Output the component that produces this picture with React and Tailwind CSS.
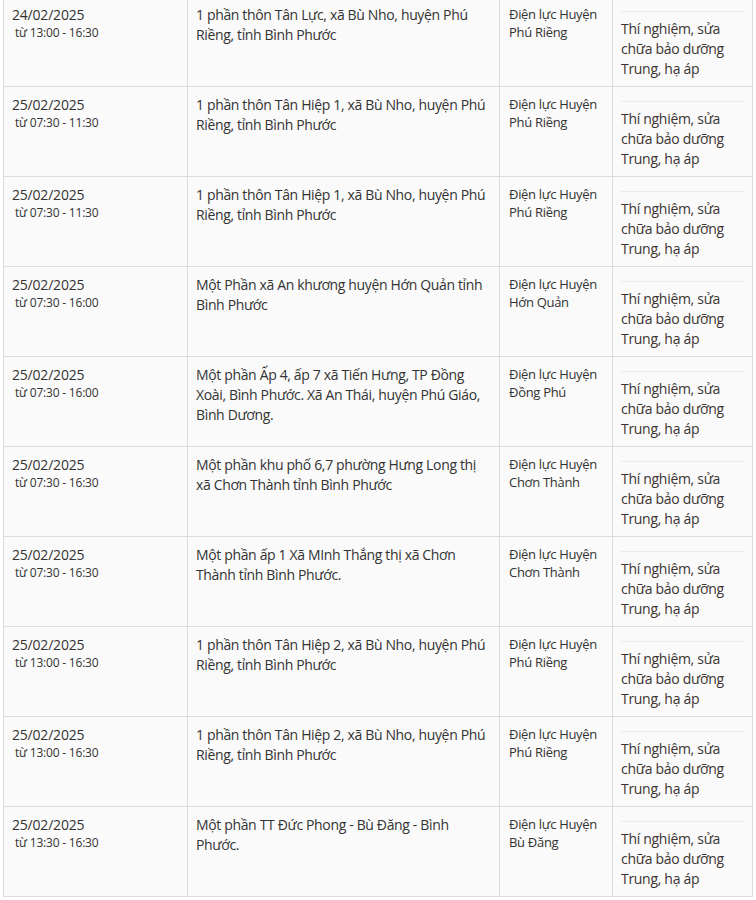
import React from 'react';

const WORK = ['Thí nghiệm, sửa', 'chữa bảo dưỡng', 'Trung, hạ áp'];

const rows = [
    { date: '24/02/2025', time: 'từ 13:00 - 16:30', area: ['1 phần thôn Tân Lực, xã Bù Nho, huyện Phú', 'Riềng, tỉnh Bình Phước'], unit: 'Phú Riềng' },
    { date: '25/02/2025', time: 'từ 07:30 - 11:30', area: ['1 phần thôn Tân Hiệp 1, xã Bù Nho, huyện Phú', 'Riềng, tỉnh Bình Phước'], unit: 'Phú Riềng' },
    { date: '25/02/2025', time: 'từ 07:30 - 11:30', area: ['1 phần thôn Tân Hiệp 1, xã Bù Nho, huyện Phú', 'Riềng, tỉnh Bình Phước'], unit: 'Phú Riềng' },
    { date: '25/02/2025', time: 'từ 07:30 - 16:00', area: ['Một Phần xã An khương huyện Hớn Quản tỉnh', 'Bình Phước'], unit: 'Hớn Quản' },
    { date: '25/02/2025', time: 'từ 07:30 - 16:00', area: ['Một phần Ấp 4, ấp 7 xã Tiến Hưng, TP Đồng', 'Xoài, Bình Phước. Xã An Thái, huyện Phú Giáo,', 'Bình Dương.'], unit: 'Đồng Phú' },
    { date: '25/02/2025', time: 'từ 07:30 - 16:30', area: ['Một phần khu phố 6,7 phường Hưng Long thị', 'xã Chơn Thành tỉnh Bình Phước'], unit: 'Chơn Thành' },
    { date: '25/02/2025', time: 'từ 07:30 - 16:30', area: ['Một phần ấp 1 Xã MInh Thắng thị xã Chơn', 'Thành tỉnh Bình Phước.'], unit: 'Chơn Thành' },
    { date: '25/02/2025', time: 'từ 13:00 - 16:30', area: ['1 phần thôn Tân Hiệp 2, xã Bù Nho, huyện Phú', 'Riềng, tỉnh Bình Phước'], unit: 'Phú Riềng' },
    { date: '25/02/2025', time: 'từ 13:00 - 16:30', area: ['1 phần thôn Tân Hiệp 2, xã Bù Nho, huyện Phú', 'Riềng, tỉnh Bình Phước'], unit: 'Phú Riềng' },
    { date: '25/02/2025', time: 'từ 13:30 - 16:30', area: ['Một phần TT Đức Phong - Bù Đăng - Bình', 'Phước.'], unit: 'Bù Đăng' },
];

const Lines = ({ lines }) => lines.map((l, i) => (
    <div key={i} className="whitespace-nowrap">{l}</div>
));

export default function App() {
    return (
        <div className="min-h-screen bg-white overflow-hidden font-['Open_Sans',sans-serif] text-[#333] text-[14px] leading-[20px]">
            <div className="ml-[3px] -mt-[4px] w-[750px] border-b border-[#dcdcdc]">
                {rows.map((r, i) => (
                    <div key={i} className="flex h-[90px] border-t border-[#dcdcdc] bg-[#fafafa]">
                        <div className="w-[184px] border-l border-[#dcdcdc] pl-2 pt-2">
                            <div className="tracking-[-0.2px]">{r.date}</div>
                            <div className="pl-[3px] text-[12px] leading-[16px] tracking-[-0.2px]">{r.time}</div>
                        </div>
                        <div className="w-[312px] border-l border-[#dcdcdc] pl-2 pt-2 tracking-[-0.35px]">
                            <Lines lines={r.area} />
                        </div>
                        <div className="w-[113px] border-l border-[#dcdcdc] pl-[9px] pt-2 text-[13px] leading-[18px] tracking-[-0.3px]">
                            <div className="whitespace-nowrap">Điện lực Huyện</div>
                            <div className="whitespace-nowrap">{r.unit}</div>
                        </div>
                        <div className="w-[141px] border-x border-[#dcdcdc] px-2 pt-[14px]">
                            <div className="border-t border-[#ebebeb] pt-[7px] tracking-[-0.3px] text-[#3b3431]">
                                <Lines lines={WORK} />
                            </div>
                        </div>
                    </div>
                ))}
            </div>
        </div>
    );
}
